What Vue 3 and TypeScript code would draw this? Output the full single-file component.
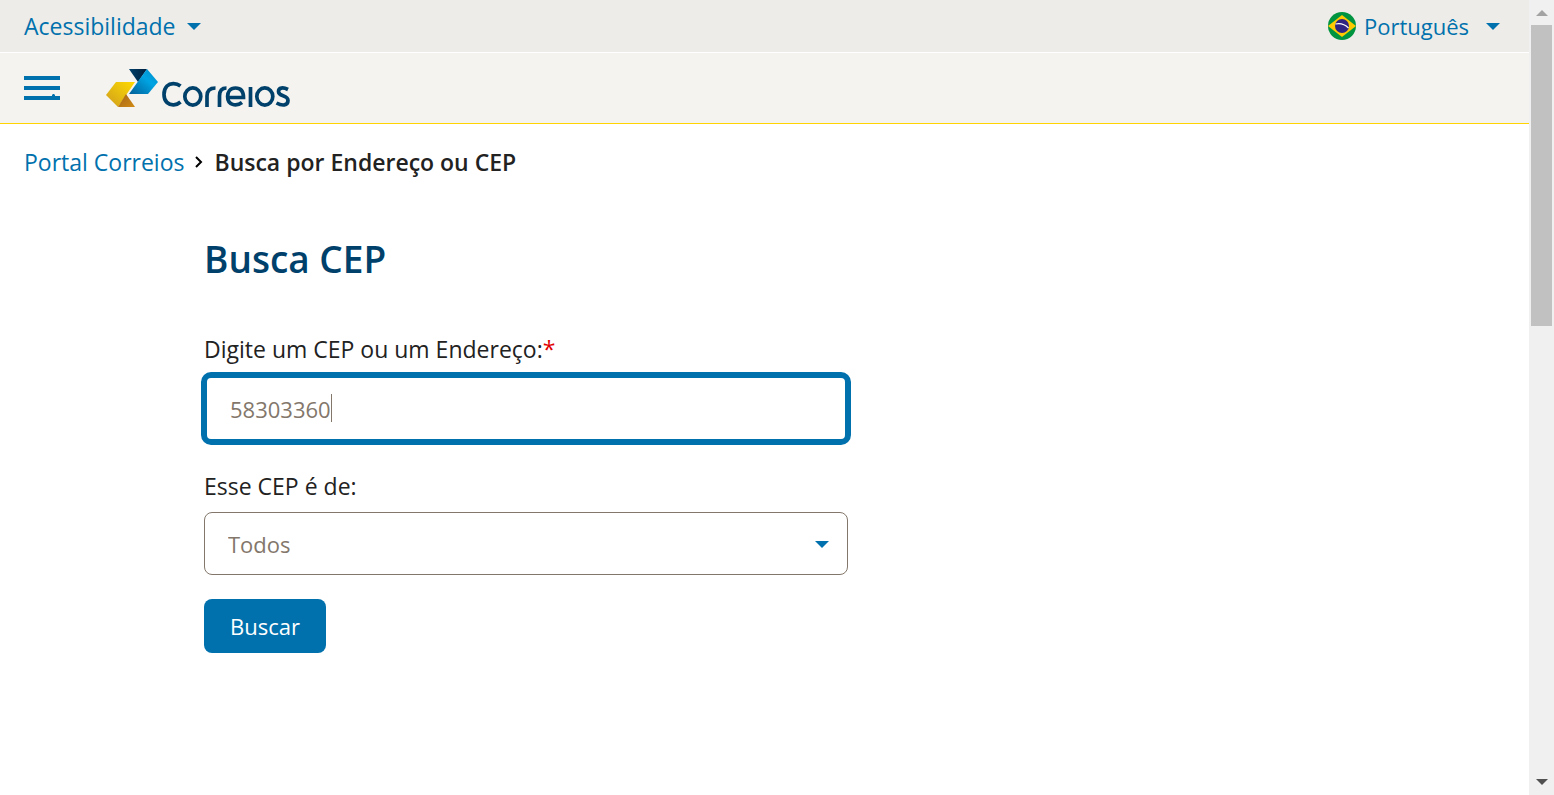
<script setup lang="ts">
import { computed, onMounted, ref } from 'vue'

const query = ref('58303360')
const kind = ref('Todos')
const kinds: string[] = ['Todos', 'Localidade/Logradouro', 'CEP Promocional', 'Caixa Postal Comunitária', 'Grande Usuário', 'Unidade Operacional']
const field = ref<HTMLInputElement | null>(null)
const cursorOffset = computed(() => ({ left: `calc(26px + ${query.value.length}ch)` }))

onMounted(() => {
  field.value?.focus()
  field.value?.setSelectionRange(query.value.length, query.value.length)
})
</script>

<template>
  <div class="window">
    <div class="page">
      <div class="access-bar">
        <button type="button" class="bar-button">
          Acessibilidade
          <svg class="caret" viewBox="0 0 14 7" aria-hidden="true"><path d="M0 0h14L7 7z" /></svg>
        </button>
        <button type="button" class="bar-button language">
          <svg class="flag" viewBox="0 0 28 28" aria-hidden="true">
            <circle cx="14" cy="14" r="14" fill="#009440" />
            <path d="M0 14 14 3l14 11-14 11z" fill="#ffcb00" />
            <circle cx="14" cy="14" r="7" fill="#302681" />
            <path d="M7.500 12C12 11 17 12.500 20.500 16" fill="none" stroke="#fff" stroke-width="1.200" />
          </svg>
          <span class="language-name">Português</span>
          <svg class="caret" viewBox="0 0 14 7" aria-hidden="true"><path d="M0 0h14L7 7z" /></svg>
        </button>
      </div>
      <header class="header">
        <button type="button" class="menu" aria-label="Menu">
          <svg viewBox="0 0 36 24" aria-hidden="true">
            <path d="M0 0h36v4H0zM0 10h36v4H0zM0 20h28v-1l1-1h1l1 1v1h5v4H0z" />
          </svg>
        </button>
        <a href="#" class="logo" aria-label="Correios">
          <svg viewBox="0 0 185 38" aria-hidden="true">
            <defs>
              <linearGradient id="gold" x1="0" y1="1" x2="1" y2="0"><stop offset="0" stop-color="#d09a1c" /><stop offset=".5" stop-color="#e6bd10" /><stop offset="1" stop-color="#ffd900" /></linearGradient>
              <linearGradient id="bronze" x1="0" y1="0" x2="1" y2="1"><stop offset="0" stop-color="#a3641c" /><stop offset="1" stop-color="#d18a13" /></linearGradient>
              <linearGradient id="sky" x1="0" y1="1" x2="1" y2="0"><stop offset="0" stop-color="#005f98" /><stop offset=".6" stop-color="#00a4e3" /><stop offset="1" stop-color="#008bc8" /></linearGradient>
              <linearGradient id="navy" x1="0" y1="0" x2="1" y2="0"><stop offset="0" stop-color="#00416b" /><stop offset="1" stop-color="#001e3c" /></linearGradient>
            </defs>
            <path d="M10 13h19L12 38 0 26z" fill="url(#gold)" />
            <path d="M20 25 29 38H12z" fill="url(#bronze)" />
            <path d="M23 0h18L32 13z" fill="url(#navy)" />
            <path d="M41 0 52 13 42 25H23z" fill="url(#sky)" />
            <g fill="none" stroke="#00416b" stroke-width="3.700">
              <path d="M74.500 17C70 13.500 64 14 61 17C57 21 57 30 61 33.500C65 37 70.500 36.500 74.500 33" />
              <ellipse cx="86.800" cy="27.500" rx="8" ry="8.600" />
              <path d="M101 38V27Q101 19 109.500 19M113.500 38V27Q113.500 19 120.500 19" />
              <path d="M122 28.500h15.500Q137.500 19 129.500 19C124 19 121.600 23 121.600 27.500C121.600 36 130 38 136 33.500" />
              <path d="M144.500 18v20" />
              <ellipse cx="158.800" cy="27.500" rx="8" ry="8.600" />
              <path d="M182 20.500C177 18 172.500 18.500 172.500 22.500C172.500 28 182 25.500 182 31.500C182 37 176 37 170.500 34" />
            </g>
          </svg>
        </a>
      </header>
      <nav class="crumbs" aria-label="Navegação">
        <a href="#">Portal Correios</a>
        <svg viewBox="0 0 8 12" aria-hidden="true"><path d="m1 1 5 5-5 5" /></svg>
        <strong>Busca por Endereço ou CEP</strong>
      </nav>
      <main class="content">
        <h1>Busca CEP</h1>
        <form @submit.prevent>
          <label for="endereco">Digite um CEP ou um Endereço:<span class="required">*</span></label>
          <div class="field">
            <input id="endereco" ref="field" v-model="query" type="text" autocomplete="off" />
            <span class="cursor" :style="cursorOffset"></span>
          </div>
          <label for="tipo">Esse CEP é de:</label>
          <div class="select">
            <select id="tipo" v-model="kind">
              <option v-for="item in kinds" :key="item">{{ item }}</option>
            </select>
            <svg class="caret" viewBox="0 0 14 7" aria-hidden="true"><path d="M0 0h14L7 7z" /></svg>
          </div>
          <button type="submit" class="submit">Buscar</button>
        </form>
      </main>
    </div>
    <div class="scrollbar" aria-hidden="true">
      <svg viewBox="0 0 12 6"><path d="M0 6h12L6 0z" fill="#a3a3a3" /></svg>
      <div class="track"><div class="thumb"></div></div>
      <svg viewBox="0 0 12 6"><path d="M0 0h12L6 6z" fill="#505050" /></svg>
    </div>
  </div>
</template>

<style>
body {
  margin: 0;
}
</style>

<style scoped>
.window {
  display: flex;
  height: 100vh;
  overflow: hidden;
  background: #fff;
  color: #222;
  font: 23px/32px "Trebuchet MS", "Open Sans", sans-serif;
}
.window *,
.window *::before {
  box-sizing: border-box;
}
.page {
  flex: 1;
  min-width: 0;
}
button,
input,
select {
  font: inherit;
}
a {
  color: #0071ad;
  text-decoration: none;
}
.access-bar {
  display: flex;
  justify-content: space-between;
  align-items: center;
  height: 53px;
  padding: 0 29px 0 24px;
  border-bottom: 1px solid #fff;
  background: #eeece8;
}
.bar-button {
  display: flex;
  align-items: center;
  gap: 11px;
  padding: 0;
  border: 0;
  background: none;
  color: #0071ad;
}
.caret {
  width: 14px;
  height: 7px;
  fill: #0071ad;
}
.flag {
  width: 28px;
  height: 28px;
}
.language {
  gap: 8px;
  font-size: 22px;
}
.language-name {
  margin-right: 9px;
}
.header {
  display: flex;
  align-items: center;
  gap: 46px;
  height: 71px;
  padding: 0 24px;
  border-bottom: 1px solid #ffd400;
  background: #f4f3ef;
}
.menu {
  padding: 0;
  border: 0;
  background: none;
}
.menu svg {
  display: block;
  width: 36px;
  height: 24px;
  fill: #0071ad;
}
.logo svg {
  display: block;
  width: 185px;
  height: 38px;
}
.crumbs {
  display: flex;
  align-items: center;
  gap: 11px;
  padding: 22px 24px;
}
.crumbs svg {
  width: 8px;
  height: 12px;
  fill: none;
  stroke: #000;
  stroke-width: 2;
}
.crumbs strong {
  font-weight: 600;
}
.content {
  max-width: 1121px;
  margin: 0 auto;
}
h1 {
  margin: 33px 0 48px;
  color: #00416b;
  font-size: 37px;
  font-weight: 600;
  line-height: 52px;
}
form {
  display: flex;
  flex-direction: column;
  align-items: flex-start;
  max-width: 644px;
}
.required {
  color: #e00000;
}
.field {
  position: relative;
  align-self: stretch;
  margin: 7px -3px 25px;
  font-size: 22px;
}
input {
  display: block;
  width: 100%;
  height: 73px;
  padding: 0 23px;
  border: 6px solid #0071ad;
  border-radius: 10px;
  outline: none;
  background: #fff;
  color: #83776b;
  caret-color: transparent;
}
.cursor {
  position: absolute;
  top: 22px;
  width: 1px;
  height: 28px;
  margin-left: 3px;
  background: #83776b;
  pointer-events: none;
}
.select {
  position: relative;
  width: 100%;
  margin: 10px 0 24px;
  font-size: 22px;
}
select {
  display: block;
  width: 100%;
  height: 63px;
  padding: 0 48px 0 23px;
  border: 1px solid #83776b;
  border-radius: 8px;
  appearance: none;
  background: #fff;
  color: #83776b;
}
.select .caret {
  position: absolute;
  top: 29px;
  right: 19px;
  pointer-events: none;
}
.submit {
  height: 54px;
  padding: 0 26px;
  border: 0;
  border-radius: 8px;
  background: #0071ad;
  color: #fff;
  font-size: 22px;
}
.scrollbar {
  display: flex;
  flex-direction: column;
  align-items: center;
  gap: 9px;
  width: 25px;
  padding: 10px 2px;
  background: #f0f0f0;
}
.scrollbar svg {
  flex: none;
  width: 12px;
  height: 6px;
}
.track {
  flex: 1;
  width: 100%;
}
.thumb {
  height: calc(40% + 3px);
  background: #c1c1c1;
}
</style>
